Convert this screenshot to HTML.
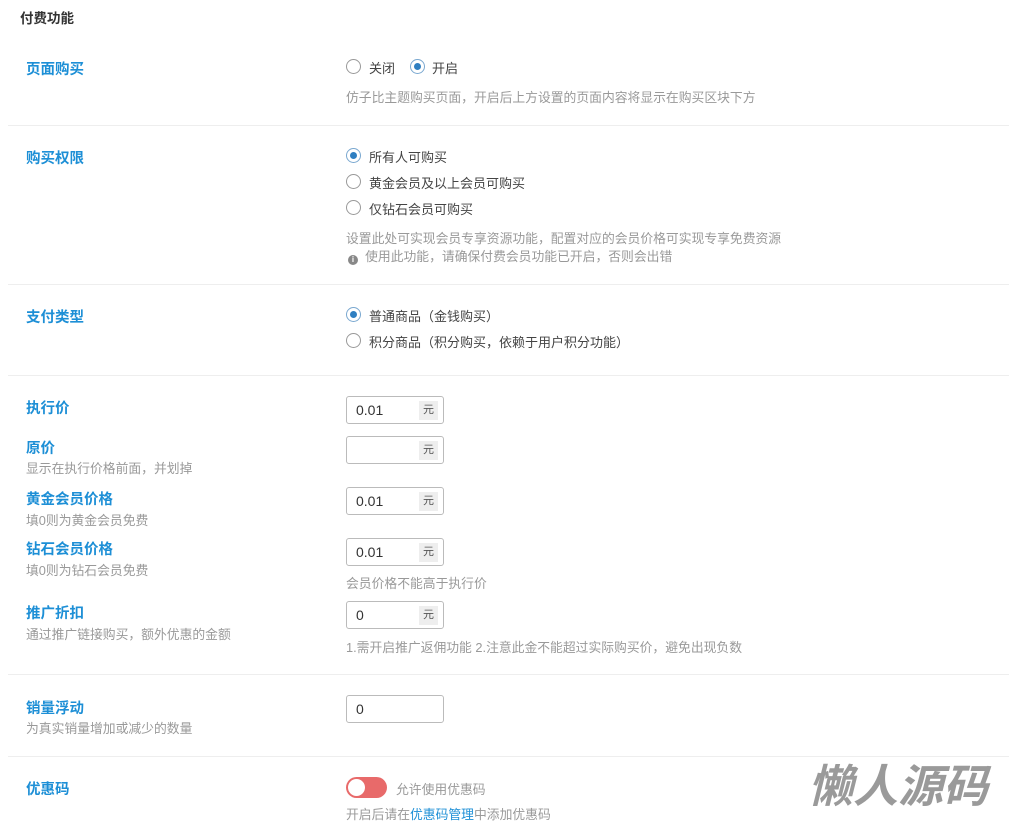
<!DOCTYPE html>
<html><head><meta charset="utf-8"><style>
*{margin:0;padding:0;box-sizing:border-box}
body{width:1009px;height:819px;background:#fff;position:relative;overflow:hidden;font-family:"Liberation Sans","Noto Sans CJK SC",sans-serif;font-size:13px;color:#555}
.a{position:absolute;white-space:nowrap}
.t{font-size:13.5px;font-weight:bold;color:#333}
.l{font-size:14.5px;font-weight:bold;color:#1d8fd6}
.d{font-size:12.8px;color:#999}
.hr{position:absolute;left:8px;right:0;height:1px;background:#eeeeee}
.r{position:absolute;width:15px;height:15px;border:1px solid #999;border-radius:50%;background:#fff}
.r.on{border-color:#7aa8d0}
.r.on:after{content:"";position:absolute;left:3px;top:3px;width:7px;height:7px;border-radius:50%;background:#2f7fc1}
.rt{position:absolute;font-size:13px;color:#444;white-space:nowrap}
.in{position:absolute;left:346px;width:98px;height:28px;border:1px solid #bbb;border-radius:3px;background:#fff;font-size:14px;color:#333;padding:5px 0 0 9px}
.in .u{position:absolute;right:5px;top:4px;width:19px;height:19px;background:#eee;font-size:11px;color:#555;text-align:center;line-height:19px}
</style></head><body>
<div class="a t" style="left:20px;top:7px">付费功能</div>

<div class="a l" style="left:26px;top:58px">页面购买</div>
<div class="r" style="left:346px;top:59px"></div><div class="rt" style="left:369px;top:58px">关闭</div>
<div class="r on" style="left:410px;top:59px"></div><div class="rt" style="left:432px;top:58px">开启</div>
<div class="a d" style="left:346px;top:87px">仿子比主题购买页面，开启后上方设置的页面内容将显示在购买区块下方</div>
<div class="hr" style="top:125px"></div>

<div class="a l" style="left:26px;top:147px">购买权限</div>
<div class="r on" style="left:346px;top:148px"></div><div class="rt" style="left:369px;top:147px">所有人可购买</div>
<div class="r" style="left:346px;top:174px"></div><div class="rt" style="left:369px;top:173px">黄金会员及以上会员可购买</div>
<div class="r" style="left:346px;top:200px"></div><div class="rt" style="left:369px;top:199px">仅钻石会员可购买</div>
<div class="a d" style="left:346px;top:228px">设置此处可实现会员专享资源功能，配置对应的会员价格可实现专享免费资源</div>
<div class="a d" style="left:348px;top:246px"><span style="display:inline-block;width:10px;height:10px;border-radius:50%;background:#888;color:#fff;font-size:8px;line-height:10px;text-align:center;font-weight:bold;vertical-align:-1px">i</span>&nbsp; 使用此功能，请确保付费会员功能已开启，否则会出错</div>
<div class="hr" style="top:284px"></div>

<div class="a l" style="left:26px;top:306px">支付类型</div>
<div class="r on" style="left:346px;top:307px"></div><div class="rt" style="left:369px;top:306px">普通商品（金钱购买）</div>
<div class="r" style="left:346px;top:333px"></div><div class="rt" style="left:369px;top:332px">积分商品（积分购买，依赖于用户积分功能）</div>
<div class="hr" style="top:375px"></div>

<div class="a l" style="left:26px;top:397px">执行价</div>
<div class="in" style="top:396px">0.01<span class="u">元</span></div>
<div class="a l" style="left:26px;top:437px">原价</div>
<div class="a d" style="left:26px;top:458px">显示在执行价格前面，并划掉</div>
<div class="in" style="top:436px"><span class="u">元</span></div>
<div class="a l" style="left:26px;top:488px">黄金会员价格</div>
<div class="a d" style="left:26px;top:510px">填0则为黄金会员免费</div>
<div class="in" style="top:487px">0.01<span class="u">元</span></div>
<div class="a l" style="left:26px;top:538px">钻石会员价格</div>
<div class="a d" style="left:26px;top:560px">填0则为钻石会员免费</div>
<div class="in" style="top:538px">0.01<span class="u">元</span></div>
<div class="a d" style="left:346px;top:573px">会员价格不能高于执行价</div>
<div class="a l" style="left:26px;top:602px">推广折扣</div>
<div class="a d" style="left:26px;top:624px">通过推广链接购买，额外优惠的金额</div>
<div class="in" style="top:601px">0<span class="u">元</span></div>
<div class="a d" style="left:346px;top:637px">1.需开启推广返佣功能 2.注意此金不能超过实际购买价，避免出现负数</div>
<div class="hr" style="top:674px"></div>

<div class="a l" style="left:26px;top:697px">销量浮动</div>
<div class="a d" style="left:26px;top:718px">为真实销量增加或减少的数量</div>
<div class="in" style="top:695px">0</div>
<div class="hr" style="top:756px"></div>

<div class="a l" style="left:26px;top:778px">优惠码</div>
<div class="a" style="left:346px;top:777px;width:41px;height:21px;border-radius:11px;background:#e86a6a"><div style="position:absolute;left:2px;top:2px;width:17px;height:17px;border-radius:50%;background:#fff"></div></div>
<div class="a d" style="left:396px;top:779px">允许使用优惠码</div>
<div class="a d" style="left:346px;top:804px">开启后请在<span style="color:#1d8fd6">优惠码管理</span>中添加优惠码</div>

<div class="a" style="left:808px;top:754px;font-size:45px;font-weight:bold;font-style:italic;color:#9a9a9a;letter-spacing:0px;font-family:'Noto Sans CJK SC',sans-serif;line-height:58px">懒人源码</div>
</body></html>
